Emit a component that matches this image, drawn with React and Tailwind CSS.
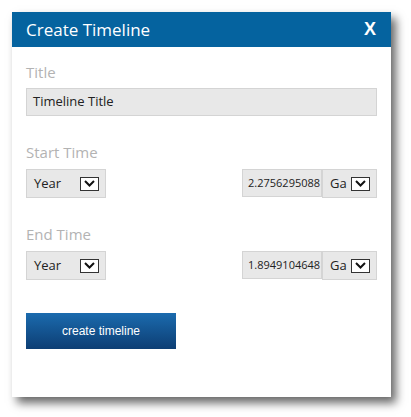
import React from 'react';

// Small square dropdown toggle with a chevron
function DropBox() {
  return (
    <span className="flex h-[14px] w-[19px] items-center justify-center border border-[#333] bg-white">
      <svg width="11" height="7" viewBox="0 0 11 7">
        <path d="M1 1 L5.5 5.5 L10 1" fill="none" stroke="#111" strokeWidth="2" />
      </svg>
    </span>
  );
}

function UnitSelect({ label, width }) {
  return (
    <div className={`flex h-[29px] items-center justify-between border border-[#d4d4d4] bg-[#e8e8e8] pl-[7px] pr-[6px] ${width}`}>
      <span className="text-[13px] text-[#222]">{label}</span>
      <DropBox />
    </div>
  );
}

function TimeRow({ label, value }) {
  return (
    <div className="mt-[26px]">
      <div className="text-[15px] leading-[20px] text-[#b3b3b3]">{label}</div>
      <div className="mt-[7px] flex items-start justify-between">
        <UnitSelect label="Year" width="w-[80px]" />
        <div className="flex">
          <div className="flex h-[28px] w-[80px] items-center whitespace-nowrap border border-[#d4d4d4] bg-[#e8e8e8] pl-[5px] text-[11px] text-[#222]">
            {value}
          </div>
          <UnitSelect label="Ga" width="w-[55px]" />
        </div>
      </div>
    </div>
  );
}

export default function App() {
  return (
    <div className="h-[417px] w-[411px] bg-white p-[12px] font-['Open_Sans',sans-serif]">
      <div className="h-[385px] w-[379px] bg-white shadow-[5px_6px_9px_rgba(0,0,0,0.6)]">
        <div className="flex h-[35px] items-center justify-between bg-[#05639f] pl-[14px] pr-[15px] text-white">
          <span className="text-[17px]">Create Timeline</span>
          <span className="font-['Liberation_Sans',sans-serif] text-[18px] font-bold">X</span>
        </div>
        <div className="px-[14px] pt-[15px]">
          <div className="text-[15px] leading-[20px] text-[#b3b3b3]">Title</div>
          <div className="mt-[6px] flex h-[28px] items-center border border-[#d4d4d4] bg-[#e8e8e8] pl-[6px] text-[13px] text-[#222]">
            Timeline Title
          </div>
          <TimeRow label="Start Time" value="2.2756295088" />
          <TimeRow label="End Time" value="1.8949104648" />
          <button className="mt-[33px] flex h-[36px] w-[150px] items-center justify-center bg-gradient-to-b from-[#1b6bae] to-[#0d3e74] font-['Liberation_Sans',sans-serif] text-[12px] text-white">
            create timeline
          </button>
        </div>
      </div>
    </div>
  );
}
